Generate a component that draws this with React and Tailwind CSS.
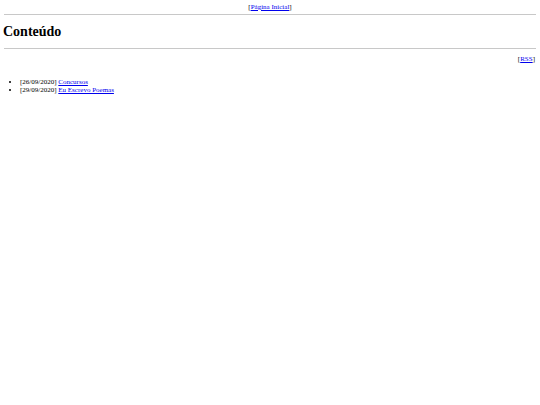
import React from 'react'

function App() {
  return (
    <div className="min-h-[405px] bg-white px-[4px] pt-[3px] text-[7px] leading-[8px] text-black" style={{ fontFamily: '"Liberation Serif", "Times New Roman", serif' }}>
      <div className="text-center">
        [<a href="#" className="text-[#0000ee] underline">Página Inicial</a>]
      </div>
      <hr className="mt-[3px] border-t border-[#c8c8c8]" />
      <h1 className="my-[8px] -ml-[1px] text-[14px] leading-[17px] font-bold">Conteúdo</h1>
      <hr className="border-t border-[#c8c8c8]" />
      <div className="mt-[6px] text-right pr-[1px]">
        [<a href="#" className="text-[#0000ee] underline">RSS</a>]
      </div>
      <ul className="mt-[16px] pl-[16px] list-disc leading-[7.5px]">
        <li>[26/09/2020] <a href="#" className="text-[#0000ee] underline">Concursos</a></li>
        <li>[29/09/2020] <a href="#" className="text-[#0000ee] underline">Eu Escrevo Poemas</a></li>
      </ul>
    </div>
  )
}

export default App
